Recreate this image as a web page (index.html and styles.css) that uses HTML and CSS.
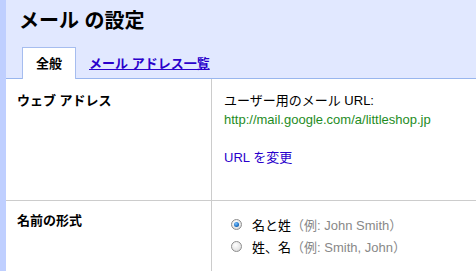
FILE: index.html
```html
<!DOCTYPE html>
<html lang="ja">
<head>
<meta charset="utf-8">
<link rel="stylesheet" href="styles.css">
</head>
<body>
<div class="page">
  <div class="sidebar"></div>
  <div class="main">
    <div class="header">
      <h1 class="title">メール の設定</h1>
      <div class="tabs">
        <div class="tab active">全般</div>
        <a class="tab-link" href="#">メール アドレス一覧</a>
      </div>
    </div>
    <div class="settings">
      <div class="label-cell row1">ウェブ アドレス</div>
      <div class="value-cell row1">
        <div class="line">ユーザー用のメール URL:</div>
        <div class="line green">http://mail.google.com/a/littleshop.jp</div>
        <div class="line">&nbsp;</div>
        <div class="line"><a class="blue" href="#">URL を変更</a></div>
      </div>
      <div class="label-cell row2">名前の形式</div>
      <div class="value-cell row2">
        <label class="radio-line"><span class="radio checked"></span><span>名と姓</span><span class="hint">（例: John Smith）</span></label>
        <label class="radio-line"><span class="radio"></span><span>姓、名</span><span class="hint">（例: Smith, John）</span></label>
      </div>
    </div>
  </div>
</div>
</body>
</html>
```

FILE: styles.css
```css
html, body {
  margin: 0;
  padding: 0;
  background: #ffffff;
}
body {
  font-family: "Liberation Sans", "Noto Sans CJK JP", sans-serif;
  font-size: 13px;
  color: #000;
}
.page {
  display: flex;
  min-height: 271px;
}
.sidebar {
  width: 6px;
  flex: none;
  background: #bfcfff;
}
.main {
  flex: 1;
  display: flex;
  flex-direction: column;
}
.header {
  background: #e1e8ff;
  padding-top: 9px;
}
.title {
  margin: 0 0 14px 13px;
  font-size: 20px;
  line-height: 24px;
  font-weight: bold;
}
.tabs {
  display: flex;
  align-items: center;
  height: 31px;
  padding-left: 16px;
  border-bottom: 1px solid #99b6ee;
}
.tab {
  height: 31px;
  line-height: 31px;
  box-sizing: border-box;
  padding: 0 13px;
  font-weight: bold;
}
.tab.active {
  background: #ffffff;
  border: 1px solid #a6bdef;
  border-bottom: none;
  height: 32px;
  align-self: flex-start;
  line-height: 31px;
  margin-bottom: -1px;
}
.tab-link {
  margin-left: 13px;
  font-weight: bold;
  color: #2a00cc;
  text-decoration: underline;
}
.settings {
  display: grid;
  grid-template-columns: 206px 1fr;
  grid-template-rows: 122px 1fr;
  flex: 1;
}
.label-cell {
  border-right: 1px solid #cccccc;
  padding: 12px 0 0 11px;
  font-weight: bold;
  line-height: 19px;
}
.value-cell {
  padding: 12px 0 0 12px;
}
.row1 {
  border-bottom: 1px solid #cccccc;
}
.label-cell.row2 {
  padding-top: 10px;
}
.value-cell.row2 {
  padding-top: 12px;
  padding-left: 19px;
}
.line {
  line-height: 19px;
}
.green {
  color: #1e8c1e;
}
.blue {
  color: #2a00cc;
  text-decoration: none;
}
.radio-line {
  display: flex;
  align-items: center;
  height: 22px;
}
.radio {
  width: 11px;
  height: 11px;
  box-sizing: border-box;
  border-radius: 50%;
  border: 1px solid #8e8e8e;
  background: radial-gradient(circle at 40% 35%, #ffffff 0%, #e6e6e6 60%, #c8c8c8 100%);
  margin-right: 10px;
  position: relative;
}
.radio.checked::after {
  content: "";
  position: absolute;
  left: 2px;
  top: 2px;
  width: 5px;
  height: 5px;
  border-radius: 50%;
  background: radial-gradient(circle at 40% 35%, #7fc4ff 0%, #1a6fc4 60%, #0b3f80 100%);
}
.hint {
  color: #888888;
}
```
